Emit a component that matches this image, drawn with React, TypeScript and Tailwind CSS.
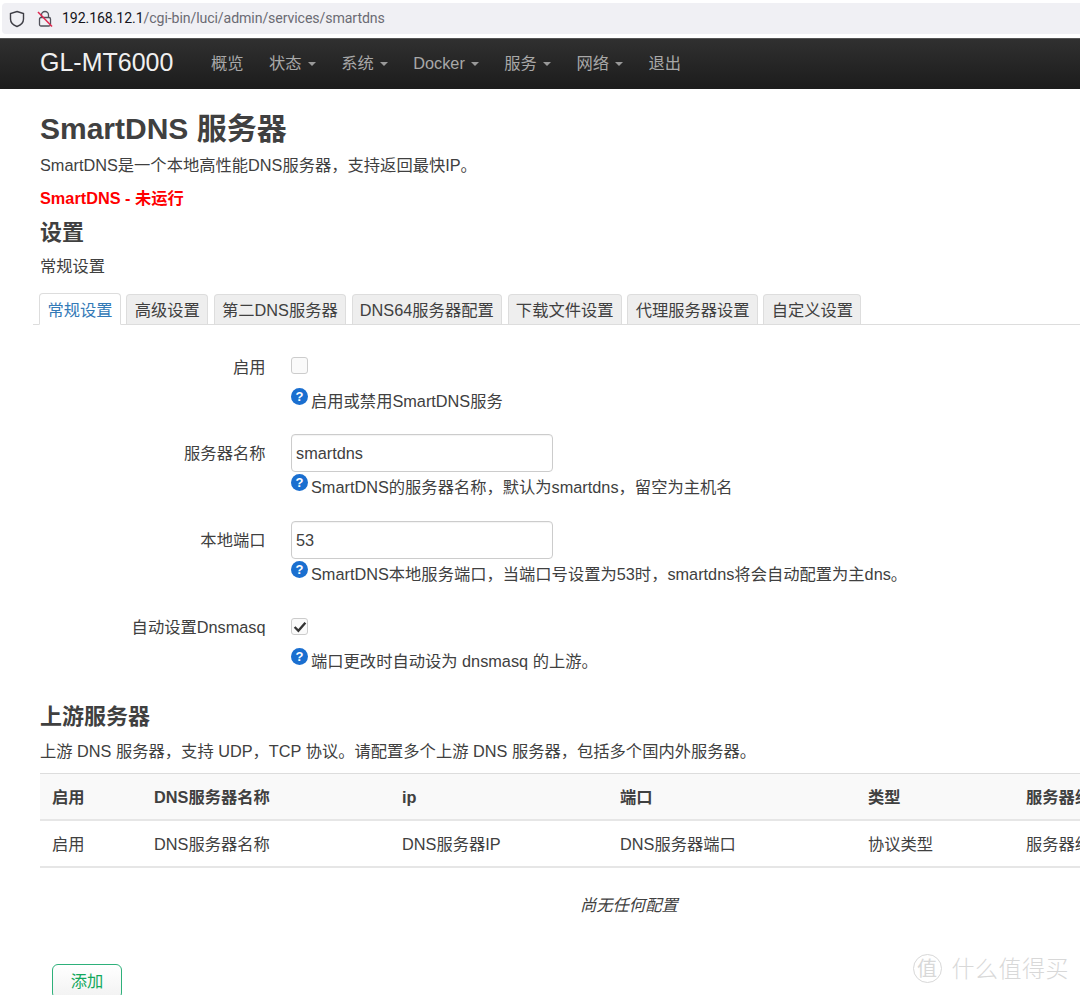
import React from "react";

function Caret() {
  return <span className="inline-block ml-[6px] align-middle w-0 h-0 border-x-[4px] border-x-transparent border-t-[4px] border-t-[#999]" />;
}

function Help({ children }: { children: React.ReactNode }) {
  return (
    <div className="flex items-start text-[16.3px] leading-[24px] text-[#404040] whitespace-nowrap">
      <svg width="17" height="17" viewBox="0 0 17 17" className="shrink-0 mt-[-1px] mr-[3px]">
        <circle cx="8.5" cy="8.5" r="8.5" fill="#1a6fd0" />
        <text x="8.5" y="13" textAnchor="middle" fontSize="13" fontWeight="700" fill="#fff" fontFamily="Liberation Sans">?</text>
      </svg>
      <span>{children}</span>
    </div>
  );
}

function Row({ label, children, className }: { label: string; children: React.ReactNode; className?: string }) {
  return (
    <div className={"flex " + (className ?? "")}>
      <div className="w-[225.5px] shrink-0 text-right text-[16.3px] leading-[24px] text-[#404040] pt-[7px]">{label}</div>
      <div className="ml-[25.5px] flex flex-col">{children}</div>
    </div>
  );
}

function TextBox({ value }: { value: string }) {
  return (
    <div className="w-[262px] h-[38px] border border-[#cccccc] rounded-[4px] px-[4px] flex items-center text-[16.3px] text-[#404040] shadow-[inset_0_1px_1px_rgba(0,0,0,0.05)]">
      {value}
    </div>
  );
}

const tabs = ["高级设置", "第二DNS服务器", "DNS64服务器配置", "下载文件设置", "代理服务器设置", "自定义设置"];
const cols = ["w-[102px]", "w-[248px]", "w-[218px]", "w-[248px]", "w-[158px]", "w-[120px]"];
const head = ["启用", "DNS服务器名称", "ip", "端口", "类型", "服务器组"];
const body = ["启用", "DNS服务器名称", "DNS服务器IP", "DNS服务器端口", "协议类型", "服务器组"];

export default function App() {
  return (
    <div className="relative w-[1080px] h-[995px] overflow-hidden bg-white text-[#404040] font-['Liberation_Sans','Noto_Sans_CJK_SC',sans-serif]">
      {/* browser address bar */}
      <div className="h-[38px] bg-white pt-[3px]">
        <div className="h-[31px] ml-[2px] bg-[#f0f0f4] rounded-l-[4px] flex items-center">
          <svg width="16" height="18" viewBox="0 0 16 18" className="ml-[7px]" fill="none" stroke="#3f3f46" strokeWidth="1.4">
            <path d="M8 1.5 14.5 3.6V9c0 3.6-2.8 6.2-6.5 7.5C4.300 15.200 1.500 12.600 1.500 9V3.600Z" />
          </svg>
          <svg width="16" height="18" viewBox="0 0 16 18" className="ml-[12px]" fill="none">
            <path d="M4.500 7.500V5a3.500 3.500 0 0 1 7 0v2.500" stroke="#52525b" strokeWidth="1.300" />
            <rect x="2.500" y="7.500" width="11" height="8.500" rx="1.500" stroke="#52525b" strokeWidth="1.300" />
            <path d="M1 2 15 16.500" stroke="#e0274f" strokeWidth="1.500" />
          </svg>
          <div className="ml-[9px] text-[14.15px] tracking-[-0.1px] text-[#6b6b73] font-['Roboto','Noto_Sans',sans-serif]">
            <span className="text-[#15141a]">192.168.12.1</span>/cgi-bin/luci/admin/services/smartdns
          </div>
        </div>
      </div>

      {/* navbar */}
      <nav className="h-[51px] border-t border-[#555] bg-gradient-to-b from-[#303030] to-[#1c1c1c] flex items-center pl-[40px]">
        <div className="text-[25px] text-[#f0f0f0] w-[171px] mt-[-3px]">GL-MT6000</div>
        <div className="flex text-[16.3px] text-[#a8a8a8] gap-[25.5px] mt-[-2px]">
          <span>概览</span>
          <span>状态<Caret /></span>
          <span>系统<Caret /></span>
          <span>Docker<Caret /></span>
          <span>服务<Caret /></span>
          <span>网络<Caret /></span>
          <span>退出</span>
        </div>
      </nav>

      <main className="pl-[40px]">
        <h1 className="mt-[19px] text-[30px] leading-[42px] font-bold text-[#404040]">SmartDNS 服务器</h1>
        <p className="mt-[3px] text-[16.3px] leading-[24px]">SmartDNS是一个本地高性能DNS服务器，支持返回最快IP。</p>
        <p className="mt-[9px] text-[16.3px] leading-[24px] font-bold text-[#ff0000]">SmartDNS - 未运行</p>
        <h2 className="mt-[8px] text-[22px] leading-[30px] font-bold">设置</h2>
        <p className="mt-[6px] text-[16.3px] leading-[24px]">常规设置</p>

        {/* tabs */}
        <div className="mt-[15px] flex items-end h-[32px] ml-[-7px] pl-[6px] border-b border-[#dddddd] gap-[5.5px] whitespace-nowrap text-[16.3px]">
          <div className="h-[32px] mb-[-1px] px-[7.4px] pt-[4px] bg-white border border-[#dddddd] border-b-white rounded-t-[4px] text-[#337ab7]">常规设置</div>
          <div className="flex gap-[5.5px]">
            {tabs.map((t) => (
              <div key={t} className="h-[30px] px-[7.3px] pt-[3px] bg-[#eeeeee] border border-[#dddddd] border-b-0 rounded-t-[4px] text-[#404040]">{t}</div>
            ))}
          </div>
        </div>

        {/* form */}
        <Row label="启用" className="mt-[23px]">
          <div className="h-[38px] flex items-start pt-[9px]">
            <div className="w-[17px] h-[17px] border border-[#cccccc] rounded-[3px] bg-[#fafafa]" />
          </div>
          <div className="mt-[3px]"><Help>启用或禁用SmartDNS服务</Help></div>
        </Row>
        <Row label="服务器名称" className="mt-[21px]">
          <TextBox value="smartdns" />
          <div className="mt-[3px]"><Help>SmartDNS的服务器名称，默认为smartdns，留空为主机名</Help></div>
        </Row>
        <Row label="本地端口" className="mt-[22px]">
          <TextBox value="53" />
          <div className="mt-[3px]"><Help>SmartDNS本地服务端口，当端口号设置为53时，smartdns将会自动配置为主dns。</Help></div>
        </Row>
        <Row label="自动设置Dnsmasq" className="mt-[22px]">
          <div className="h-[38px] flex items-start pt-[10px]">
            <div className="w-[17px] h-[17px] border border-[#cccccc] rounded-[3px] bg-[#fafafa] flex items-center justify-center">
              <svg width="14" height="12" viewBox="0 0 13 11" fill="none" stroke="#333" strokeWidth="2.200">
                <path d="M1.500 5.500 5 9l6.500-7.500" />
              </svg>
            </div>
          </div>
          <div className="mt-[3px]"><Help>端口更改时自动设为 dnsmasq 的上游。</Help></div>
        </Row>

        {/* upstream */}
        <h2 className="mt-[29px] text-[22px] leading-[30px] font-bold">上游服务器</h2>
        <p className="mt-[7px] text-[16.3px] leading-[24px] whitespace-nowrap">上游 DNS 服务器，支持 UDP，TCP 协议。请配置多个上游 DNS 服务器，包括多个国内外服务器。</p>

        <div className="mt-[10px] border-t border-[#dddddd] whitespace-nowrap text-[16.3px] w-[1180px]">
          <div className="flex h-[47px] items-center pt-[2px] bg-[#f9f9f9] border-b-2 border-[#e6e6e6] font-bold">
            {head.map((h, i) => (
              <div key={h} className={"pl-[12px] shrink-0 " + cols[i]}>{h}</div>
            ))}
          </div>
          <div className="flex h-[47px] items-center pt-[2px] border-b-2 border-[#e6e6e6]">
            {body.map((h, i) => (
              <div key={h} className={"pl-[12px] shrink-0 " + cols[i]}>{h}</div>
            ))}
          </div>
        </div>
        <div className="w-[1180px] pl-[540px] mt-[25px] text-[16.3px] leading-[24px] italic">尚无任何配置</div>

        <div className="mt-[47px] ml-[12px] w-[70px] h-[35px] border border-[#2eb07a] rounded-[6px] bg-gradient-to-b from-white to-[#f2f2f2] text-[#12a85c] text-[16.3px] flex items-center justify-center">添加</div>
      </main>

      {/* watermark */}
      <div className="absolute right-[11px] bottom-[9px] flex items-center text-[#d8d8d8]">
        <div className="w-[29px] h-[29px] rounded-full border border-[#d8d8d8] flex items-center justify-center text-[20px]">值</div>
        <span className="ml-[10px] text-[23px] tracking-[0.5px] font-light">什么值得买</span>
      </div>
    </div>
  );
}
